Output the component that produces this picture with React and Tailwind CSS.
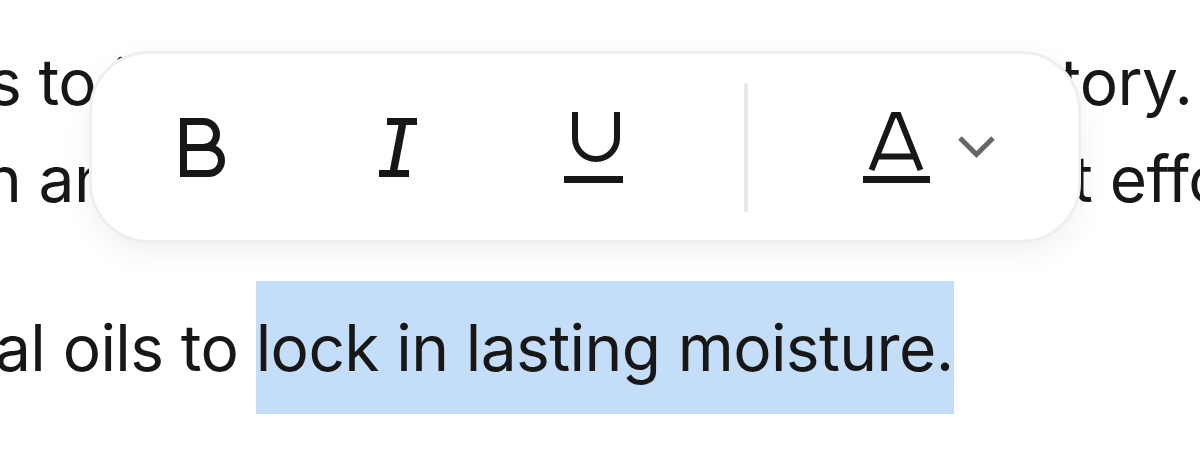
const textFont = { fontFamily: "Inter, 'Noto Sans', sans-serif" };

function BoldIcon() {
  return (
    <svg width="45" height="59" viewBox="0 0 45 59" fill="none" stroke="#171717" strokeWidth="7">
      <path d="M3.5 29.5H23.5A13 13 0 0 0 23.5 3.5H3.5V55.5H28.5A13 13 0 0 0 28.5 29.5H3.5" />
    </svg>
  );
}

function ItalicIcon() {
  return (
    <svg width="38" height="59" viewBox="0 0 38 59" fill="none" stroke="#171717" strokeWidth="7">
      <path d="M8 3.5H38M0 55.5H30" />
      <path d="M24 3.5L14 55.5" strokeWidth="7.5" />
    </svg>
  );
}

function UnderlineIcon() {
  return (
    <svg width="59" height="71" viewBox="0 0 59 71" fill="none" stroke="#171717">
      <path d="M11 0V26A21 21 0 0 0 53 26V0" strokeWidth="6" />
      <path d="M0 67.5H59" strokeWidth="7" />
    </svg>
  );
}

function TextColorIcon() {
  return (
    <svg width="67" height="71" viewBox="0 0 67 71" fill="none" stroke="#171717">
      <path d="M8.5 58L30.5 3H35.5L57.5 58" strokeWidth="6" />
      <path d="M14 44.5H52" strokeWidth="6" />
      <path d="M0 67.5H67" strokeWidth="7" />
    </svg>
  );
}

function ChevronIcon() {
  return (
    <svg width="37" height="22" viewBox="0 0 37 22" fill="none" stroke="#666666" strokeWidth="5">
      <path d="M2 2L18.5 18.5L35 2" />
    </svg>
  );
}

function App() {
  return (
    <div className="relative h-[467px] w-[1200px] overflow-hidden bg-white text-[#171717]" style={textFont}>
      <div className="pt-[33px] text-[64px] leading-[97px] tracking-[-0.6px]">
        <div className="flex whitespace-nowrap">
          <span className="ml-[-12px] w-[1072px] shrink-0 overflow-hidden">s to improve skin with a rich his</span>
          <span>tory.</span>
        </div>
        <div className="flex whitespace-nowrap">
          <span className="ml-[-16px] w-[1088px] shrink-0 overflow-hidden">n and shea butter that absorbs fas</span>
          <span>t effortlessly</span>
        </div>
        <p className="mt-[72px] ml-[-5px] whitespace-nowrap">
          al oils to{" "}
          <span className="bg-[#c4ddf8] pt-[28px] pb-[28px]">lock in lasting moisture.</span>
        </p>
      </div>

      <div className="absolute left-[89px] top-[51px] flex h-[192px] w-[992px] items-center rounded-[60px] border-[3px] border-[#efefef] bg-white pl-[88px] shadow-[0_10px_30px_rgba(0,0,0,0.06)]">
        <button type="button" className="shrink-0">
          <BoldIcon />
        </button>
        <button type="button" className="ml-[154px] shrink-0">
          <ItalicIcon />
        </button>
        <button type="button" className="ml-[147px] shrink-0">
          <UnderlineIcon />
        </button>
        <div className="ml-[121px] h-[129px] w-[4px] shrink-0 rounded-full bg-[#e8e8e8]" />
        <button type="button" className="ml-[115px] flex shrink-0 items-center">
          <TextColorIcon />
          <span className="ml-[28px]">
            <ChevronIcon />
          </span>
        </button>
      </div>
    </div>
  );
}

export default App;
